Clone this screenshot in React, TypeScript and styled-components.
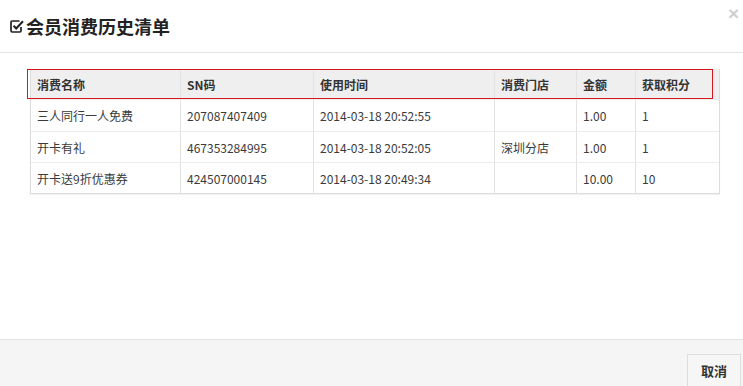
import styled, { createGlobalStyle } from 'styled-components'

const GlobalStyle = createGlobalStyle`
  html, body {
    margin: 0;
    padding: 0;
    background: #fff;
  }
  body {
    font-family: "Noto Sans CJK SC", "Liberation Sans", sans-serif;
    color: #333;
  }
`

const Modal = styled.div`
  display: flex;
  flex-direction: column;
  height: 386px;
  overflow: hidden;
`

const Header = styled.div`
  position: relative;
  height: 52px;
  border-bottom: 1px solid #e5e5e5;
  display: flex;
  align-items: center;
  padding-left: 10px;
  gap: 2px;
`

const Title = styled.h4`
  margin: 0;
  font-size: 18px;
  font-weight: bold;
  color: #222;
  line-height: 1;
`

const Close = styled.span`
  position: absolute;
  right: 4px;
  top: 4px;
  font-family: "Liberation Sans", sans-serif;
  font-size: 19px;
  font-weight: bold;
  color: #cfcfcf;
  line-height: 1;
`

const Body = styled.div`
  flex: 1;
  padding: 16px 24px 0 30px;
`

const cols = '149px 133px 181px 82px 59px 84px'

const Table = styled.div`
  width: 688px;
  border: 1px solid #dcdcdc;
  border-top: none;
  box-shadow: 0 1px 1px rgba(0, 0, 0, 0.05);
`

const HeadRow = styled.div`
  position: relative;
  display: grid;
  grid-template-columns: ${cols};
  height: 30px;
  background: #efefef;

  &::after {
    content: '';
    position: absolute;
    left: -4px;
    right: 6px;
    top: 0;
    bottom: 0;
    border: 1px solid #d9161b;
    pointer-events: none;
  }
`

const Row = styled.div`
  display: grid;
  grid-template-columns: ${cols};
  height: 30px;
  border-top: 1px solid #ececec;

  &:nth-child(2) {
    height: 31px;
  }
`

const Cell = styled.div<{ $head?: boolean }>`
  display: flex;
  align-items: center;
  padding-left: 6px;
  font-size: 12px;
  font-weight: ${(p) => (p.$head ? 'bold' : 'normal')};
  color: ${(p) => (p.$head ? '#333' : '#3a3a3a')};
  border-left: 1px solid #e2e2e2;
  white-space: nowrap;

  &:first-child {
    border-left: none;
  }
`

const Footer = styled.div`
  height: 47px;
  border-top: 1px solid #e5e5e5;
  background: #f5f5f5;
  display: flex;
  justify-content: flex-end;
  padding: 14px 2px 0 0;
  box-sizing: border-box;
`

const Button = styled.button`
  width: 54px;
  height: 34px;
  border: 1px solid #dedede;
  background: #f6f6f6;
  font-family: "Noto Sans CJK SC", sans-serif;
  font-size: 13px;
  font-weight: bold;
  color: #333;
  padding: 0;
  padding-bottom: 2px;
`

const CheckIcon = () => (
  <svg width="14" height="14" viewBox="0 0 14 14">
    <path
      d="M11 8v3.8a1.2 1.2 0 0 1-1.2 1.2H2.2A1.2 1.2 0 0 1 1 11.8V3.2A1.2 1.2 0 0 1 2.2 2H9.5"
      fill="none"
      stroke="#222"
      strokeWidth="1.7"
    />
    <path d="M3.6 6.8l2.6 2.7L13 2.2" fill="none" stroke="#222" strokeWidth="2.1" />
  </svg>
)

const heads = ['消费名称', 'SN码', '使用时间', '消费门店', '金额', '获取积分']

const rows = [
  ['三人同行一人免费', '207087407409', '2014-03-18 20:52:55', '', '1.00', '1'],
  ['开卡有礼', '467353284995', '2014-03-18 20:52:05', '深圳分店', '1.00', '1'],
  ['开卡送9折优惠券', '424507000145', '2014-03-18 20:49:34', '', '10.00', '10'],
]

export default function App() {
  return (
    <Modal>
      <GlobalStyle />
      <Header>
        <CheckIcon />
        <Title>会员消费历史清单</Title>
        <Close>×</Close>
      </Header>
      <Body>
        <Table>
          <HeadRow>
            {heads.map((h) => (
              <Cell $head key={h}>
                {h}
              </Cell>
            ))}
          </HeadRow>
          {rows.map((r) => (
            <Row key={r[1]}>
              {r.map((c, i) => (
                <Cell key={i}>{c}</Cell>
              ))}
            </Row>
          ))}
        </Table>
      </Body>
      <Footer>
        <Button>取消</Button>
      </Footer>
    </Modal>
  )
}
